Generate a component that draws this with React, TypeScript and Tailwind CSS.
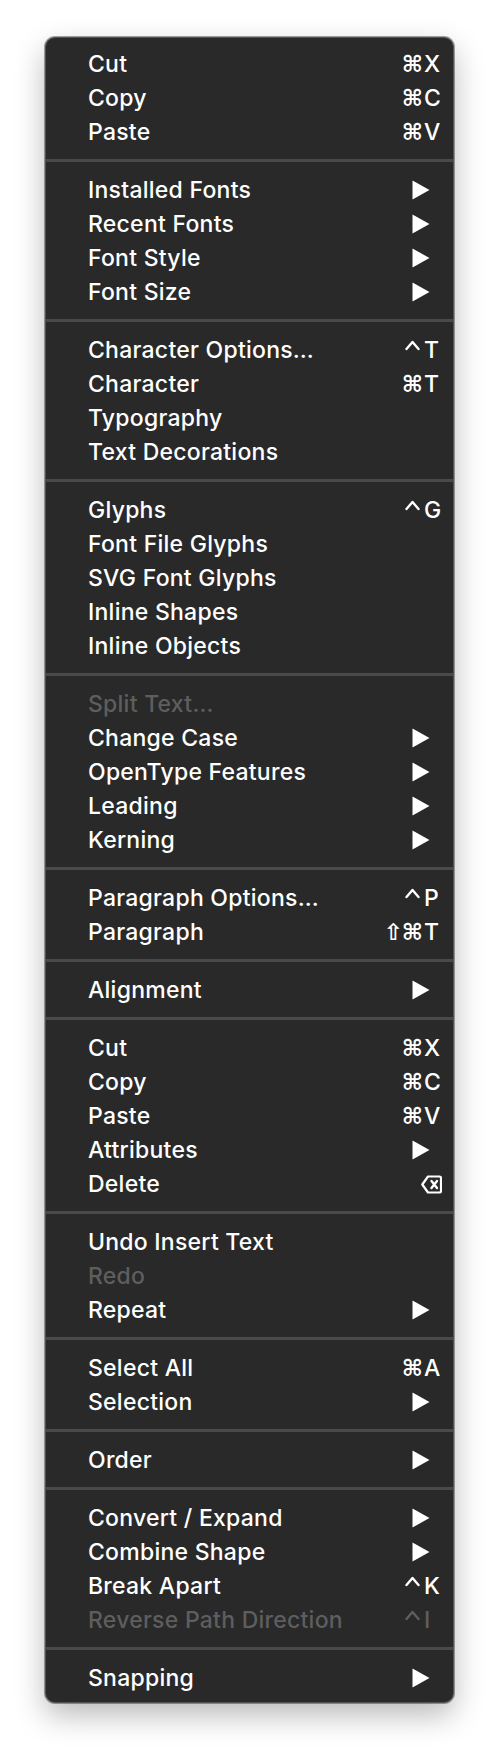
import React from "react";

type Shortcut = { mods: string; key: string };
type Item = {
  label: string;
  disabled?: boolean;
  shortcut?: Shortcut;
  arrow?: boolean;
  del?: boolean;
};

const groups: Item[][] = [
  [
    { label: "Cut", shortcut: { mods: "⌘", key: "X" } },
    { label: "Copy", shortcut: { mods: "⌘", key: "C" } },
    { label: "Paste", shortcut: { mods: "⌘", key: "V" } },
  ],
  [
    { label: "Installed Fonts", arrow: true },
    { label: "Recent Fonts", arrow: true },
    { label: "Font Style", arrow: true },
    { label: "Font Size", arrow: true },
  ],
  [
    { label: "Character Options…", shortcut: { mods: "⌃", key: "T" } },
    { label: "Character", shortcut: { mods: "⌘", key: "T" } },
    { label: "Typography" },
    { label: "Text Decorations" },
  ],
  [
    { label: "Glyphs", shortcut: { mods: "⌃", key: "G" } },
    { label: "Font File Glyphs" },
    { label: "SVG Font Glyphs" },
    { label: "Inline Shapes" },
    { label: "Inline Objects" },
  ],
  [
    { label: "Split Text…", disabled: true },
    { label: "Change Case", arrow: true },
    { label: "OpenType Features", arrow: true },
    { label: "Leading", arrow: true },
    { label: "Kerning", arrow: true },
  ],
  [
    { label: "Paragraph Options…", shortcut: { mods: "⌃", key: "P" } },
    { label: "Paragraph", shortcut: { mods: "⇧⌘", key: "T" } },
  ],
  [{ label: "Alignment", arrow: true }],
  [
    { label: "Cut", shortcut: { mods: "⌘", key: "X" } },
    { label: "Copy", shortcut: { mods: "⌘", key: "C" } },
    { label: "Paste", shortcut: { mods: "⌘", key: "V" } },
    { label: "Attributes", arrow: true },
    { label: "Delete", del: true },
  ],
  [
    { label: "Undo Insert Text" },
    { label: "Redo", disabled: true },
    { label: "Repeat", arrow: true },
  ],
  [
    { label: "Select All", shortcut: { mods: "⌘", key: "A" } },
    { label: "Selection", arrow: true },
  ],
  [{ label: "Order", arrow: true }],
  [
    { label: "Convert / Expand", arrow: true },
    { label: "Combine Shape", arrow: true },
    { label: "Break Apart", shortcut: { mods: "⌃", key: "K" } },
    { label: "Reverse Path Direction", disabled: true, shortcut: { mods: "⌃", key: "I" } },
  ],
  [{ label: "Snapping", arrow: true }],
];

function Arrow() {
  return (
    <svg width="18" height="20" viewBox="0 0 18 20" className="mr-[12px]">
      <path d="M0.5 0.5 L17.5 10 L0.5 19.5 Z" fill="#ffffff" />
    </svg>
  );
}

function DeleteIcon() {
  return (
    <svg width="21" height="19" viewBox="0 0 21 19">
      <path
        d="M7 1.5 H18.5 A1.5 1.5 0 0 1 20 3 V16 A1.5 1.5 0 0 1 18.5 17.5 H7 L1.3 9.5 Z"
        fill="none"
        stroke="#ffffff"
        strokeWidth="2.2"
        strokeLinejoin="round"
      />
      <path d="M10.5 6 L16 13 M16 6 L10.5 13" stroke="#ffffff" strokeWidth="2.4" strokeLinecap="round" />
    </svg>
  );
}

function Caret({ color }: { color: string }) {
  return (
    <svg width="15" height="18" viewBox="0 0 15 18" className="mr-[2px] mt-[7px] self-start">
      <path d="M1.5 9 L7.5 2 L13.5 9" fill="none" stroke={color} strokeWidth="2.4" strokeLinecap="round" strokeLinejoin="round" />
    </svg>
  );
}

function Row({ item }: { item: Item }) {
  const color = item.disabled ? "text-[#5e5e5e]" : "text-[#ffffff]";
  const hex = item.disabled ? "#5e5e5e" : "#ffffff";
  return (
    <div className={`flex h-[34px] items-center pl-[42px] pr-[11px] ${color}`}>
      <span className="flex-1 whitespace-nowrap">{item.label}</span>
      {item.shortcut && (
        <span className="flex h-[34px] items-center">
          {item.shortcut.mods === "⌃" ? (
            <Caret color={hex} />
          ) : (
            <span className="whitespace-nowrap text-right font-['DejaVu_Sans',sans-serif] text-[23px] font-bold tracking-[-1px]">
              {item.shortcut.mods}
            </span>
          )}
          <span className="w-[20px] pl-[2px] text-left">{item.shortcut.key}</span>
        </span>
      )}
      {item.arrow && <Arrow />}
      {item.del && <DeleteIcon />}
    </div>
  );
}

export default function App() {
  return (
    <div className="min-h-[1756px] w-[500px] bg-white pl-[45px] pt-[37px]">
      <div className="w-[409px] overflow-hidden rounded-[10px] border border-[#525252] bg-[#292929] pb-[7px] pt-[9px] font-['Inter',sans-serif] text-[23px] font-medium leading-none tracking-[0.25px] shadow-[0_0_0_1px_rgba(0,0,0,0.35),0_12px_30px_rgba(0,0,0,0.28)]">
        {groups.map((g, gi) => (
          <div key={gi}>
            {gi > 0 && (
              <div className="pb-[11px] pt-[10px]">
                <div className="h-[3px] bg-[#4a4a4a]" />
              </div>
            )}
            {g.map((it, ii) => (
              <Row key={ii} item={it} />
            ))}
          </div>
        ))}
      </div>
    </div>
  );
}
